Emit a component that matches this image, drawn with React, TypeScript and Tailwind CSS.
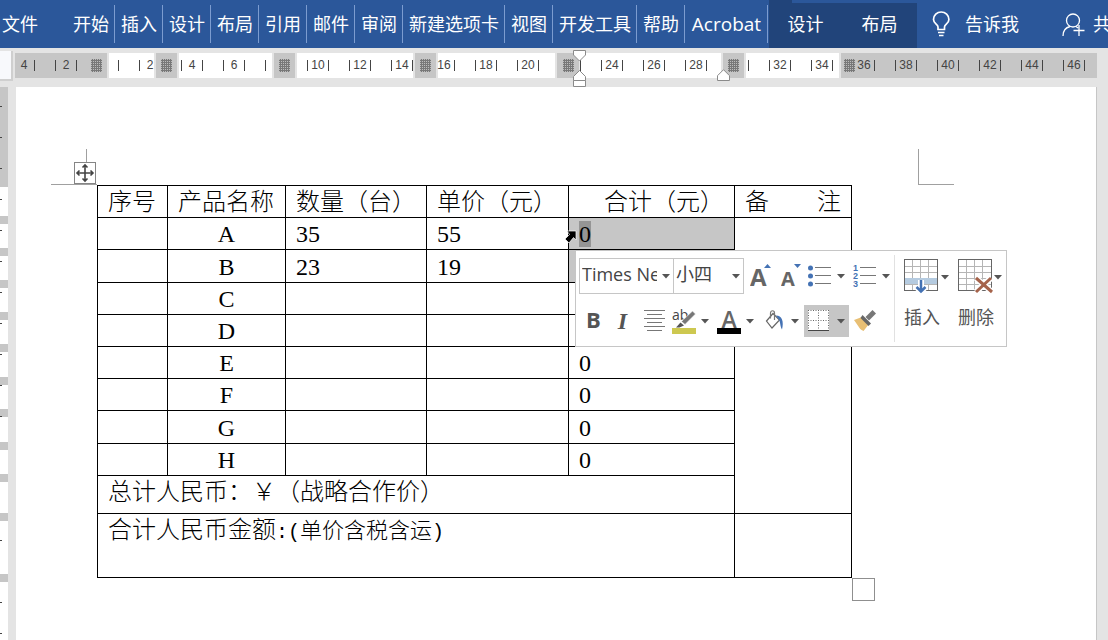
import type { ReactNode } from "react";
import clsx from "clsx";

const TABS = ["开始", "插入", "设计", "布局", "引用", "邮件", "审阅", "新建选项卡", "视图", "开发工具", "帮助", "Acrobat"];

// ── Regla ────────────────────────────────────────────────────────────────────
interface Tramo {
  ancho: string;
  gris?: boolean;
  marca?: string;
}

const TRAMOS: Tramo[] = [
  { ancho: "w-[92px]", gris: true, marca: "justify-end pr-[5px]" },
  { ancho: "w-[45px]" },
  { ancho: "w-[21px]", gris: true, marca: "justify-center" },
  { ancho: "w-[93px]" },
  { ancho: "w-[21px]", gris: true, marca: "justify-center" },
  { ancho: "w-[116px]" },
  { ancho: "w-[21px]", gris: true, marca: "justify-center" },
  { ancho: "w-[117px]" },
  { ancho: "w-[22px]", gris: true, marca: "justify-center" },
  { ancho: "w-[140px]" },
  { ancho: "w-[21px]", gris: true, marca: "justify-center" },
  { ancho: "w-[93px]" },
  { ancho: "w-[256px]", gris: true, marca: "pl-[3px]" },
];

interface Paso {
  n: string;
  izq?: boolean;
  der?: boolean;
}

const PASOS: Paso[] = [
  { n: "4", izq: false },
  { n: "2" },
  { n: "", izq: false },
  { n: "2", der: false },
  { n: "4" },
  { n: "6" },
  { n: "", der: false },
  { n: "10" },
  { n: "12" },
  { n: "14" },
  { n: "16", izq: false },
  { n: "18" },
  { n: "20" },
  { n: "", izq: false },
  { n: "24" },
  { n: "26" },
  { n: "28" },
  { n: "", izq: false },
  { n: "32" },
  { n: "34" },
  { n: "36", izq: false },
  { n: "38" },
  { n: "40" },
  { n: "42" },
  { n: "44" },
  { n: "46" },
];

function Marca() {
  return (
    <svg width="11" height="13" shapeRendering="crispEdges">
      <defs>
        <pattern id="trama" width="2" height="2" patternUnits="userSpaceOnUse">
          <rect width="2" height="2" fill="#787878" />
          <rect width="1" height="1" fill="#bcbcbc" />
        </pattern>
      </defs>
      <rect width="11" height="13" fill="url(#trama)" />
    </svg>
  );
}

function Regla() {
  return (
    <div className="flex h-[39px] bg-[#e4e4e4]">
      <div className="mt-[3px] h-[30px] w-[13px] shrink-0 border-r-2 border-b-2 border-[#cfcfcf] bg-[#f8f9fc]" />
      <div className="relative ml-[2px] mt-[5px] h-[25px] min-w-0 flex-1">
        <div className="flex h-full gap-[2px] overflow-hidden">
          {TRAMOS.map((t, i) => (
            <div key={i} className={clsx("flex shrink-0 items-center", t.ancho, t.gris ? "bg-[#c6c6c6]" : "bg-white", t.marca)}>
              {t.marca && <Marca />}
            </div>
          ))}
        </div>
        <div className="absolute inset-0 flex items-center overflow-hidden">
          {PASOS.map((p, i) => (
            <div key={i} className={clsx("flex w-[42px] shrink-0 items-center justify-center", i === 0 && "-ml-[12px]")}>
              <span className={clsx("h-[11px] w-px", p.izq !== false && "bg-[#444]")} />
              <span className="w-[20px] text-center text-[12px] leading-[25px] text-[#444]">{p.n}</span>
              <span className={clsx("h-[11px] w-px", p.der !== false && "bg-[#444]")} />
            </div>
          ))}
        </div>
        {/* sangrías */}
        <svg className="absolute -top-[3px] left-[558px]" width="14" height="37" fill="#fff" stroke="#8a8a8a">
          <path d="M.5.5h12v4.500l-6 6-6-6z" />
          <path d="M6.500 20.500l6 6v4h-12v-4z" />
          <path d="M.5 30.500h12v6h-12z" />
        </svg>
        <svg className="absolute top-[16px] left-[702px]" width="14" height="13" fill="#fff" stroke="#8a8a8a">
          <path d="M6.500.7l6 6v4.800h-12V6.700z" />
        </svg>
      </div>
    </div>
  );
}

const TRAMOS_V = [
  "h-[29px]", "h-[24px]", "h-[24px]", "h-[24px]", "h-[24px]", "h-[25px]",
  "h-[24px]", "h-[25px]", "h-[24px]", "h-[31px]", "h-[53px]",
];
const MARCAS_V = [1, 1, 1, 1, 1, 1, 1, 1, 1, 1, 1, 0, 0, 0, 1, 0, 1, 1];

function ReglaVertical() {
  return (
    <div className="relative flex w-[16px] shrink-0 flex-col overflow-hidden border-r-8 border-[#e4e4e4] bg-white">
      <div className="h-[100px] bg-[#c6c6c6]" />
      {TRAMOS_V.map((h, i) => (
        <div key={i} className="border-b-8 border-[#c6c6c6]">
          <div className={h} />
        </div>
      ))}
      <div className="absolute top-[4px] left-0">
        {MARCAS_V.map((v, i) => (
          <div key={i} className="flex h-[31px] items-center">
            <span className={clsx("h-px w-[2px]", v === 1 && "bg-[#444]")} />
          </div>
        ))}
      </div>
    </div>
  );
}

// ── Cinta ────────────────────────────────────────────────────────────────────
function Cinta() {
  return (
    <nav className="flex h-[48px] overflow-hidden bg-[#2b579a] text-[18px] text-white">
      <button className="w-[68px] shrink-0 pl-[2px] text-left">文件</button>
      {TABS.map((t) => (
        <div key={t} className="flex shrink-0 items-center">
          <button className={clsx("h-full", t === "Acrobat" ? "w-[81px] text-[19px]" : "px-[5px]")}>{t}</button>
          <span className="h-[38px] w-px bg-[#7c9cd0]" />
          {t !== "Acrobat" && <span className="w-px" />}
        </div>
      ))}
      <div className="ml-px w-[148px] shrink-0 bg-[linear-gradient(#21447a,#21447a)] bg-[length:100%_45px] bg-bottom bg-no-repeat">
        <div className="flex h-full bg-[linear-gradient(#21447a,#21447a)] bg-[length:23px_3px] bg-no-repeat">
          <button className="w-[73px]">设计</button>
          <button className="w-[75px]">布局</button>
        </div>
      </div>
      <button className="ml-[15px] flex shrink-0 items-center gap-[13px]">
        <svg width="20" height="26" viewBox="0 0 20 26" fill="none" stroke="#fff" strokeWidth="1.700">
          <path d="M6 18.500V16C6 13.500 1.500 12.500 1.500 8.500a7.700 7.500 0 0 1 15.400 0C17 12.500 12.500 13.500 12.500 16v2.500z" />
          <path d="M6 21.500h6.500M7 24.500h4.500" />
        </svg>
        <span>告诉我</span>
      </button>
      <button className="ml-[43px] flex shrink-0 items-center gap-[7px]">
        <svg width="24" height="24" viewBox="0 0 24 24" fill="none" stroke="#fff" strokeWidth="1.300">
          <circle cx="11" cy="8.500" r="6.500" />
          <path d="M1 24c0-5 3-8.500 7-9.500M14 14.500l2 1.500M17 13v11M11.500 18.500h11" />
        </svg>
        <span>共享</span>
      </button>
    </nav>
  );
}

// ── Barra flotante ───────────────────────────────────────────────────────────
function Flecha() {
  return (
    <svg className="shrink-0" width="8" height="5" fill="#555">
      <path d="M0 0h8L4 4.500z" />
    </svg>
  );
}

interface BotonProps {
  label: string;
  className?: string;
  flecha?: boolean;
  children: ReactNode;
}

function Boton({ label, className, flecha, children }: BotonProps) {
  return (
    <button
      aria-label={label}
      className={clsx("flex h-[32px] shrink-0 items-center", flecha ? "gap-[5px] pl-px" : "justify-center", className)}
    >
      {children}
      {flecha && <Flecha />}
    </button>
  );
}

function Lista({ label, valor, className }: { label: string; valor: string; className: string }) {
  return (
    <label className={clsx("relative flex h-[36px] shrink-0 items-center border border-[#c6c6c6] text-[18px]", className)}>
      <select aria-label={label} className="h-[32px] w-full appearance-none bg-transparent pr-[16px] pb-[4px] pl-[2px] text-[#444]">
        <option>{valor}</option>
      </select>
      <span className="pointer-events-none absolute right-[3px]">
        <Flecha />
      </span>
    </label>
  );
}

function Rejilla({ children }: { children: ReactNode }) {
  return (
    <svg className="shrink-0" width="35" height="36" viewBox="0 0 35 36" fill="none">
      <path d="M1 7.500h32M1 13.500h32M1 19.500h32M1 25.500h32M8.500 1v31M16.500 1v31M24.500 1v31" stroke="#b5b5b5" />
      <rect x=".5" y=".5" width="33" height="31" stroke="#666" />
      {children}
    </svg>
  );
}

function BarraFlotante() {
  return (
    <div className="absolute top-[65px] left-[478px] flex h-[97px] w-[432px] border border-[#c6c6c6] bg-white font-['Open_Sans','Noto_Sans_CJK_SC',sans-serif] text-[#555]">
      <div className="my-[4px] w-[319px] border-r border-[#e1e1e1] pl-[3px]">
        <div className="flex items-center pt-[3px]">
          <Lista label="字体" valor="Times New Roman" className="w-[95px]" />
          <Lista label="字号" valor="小四" className="-ml-px w-[71px]" />
          <Boton label="增大字号" className="ml-[3px] w-[31px]">
            <svg width="26" height="32" className="font-bold">
              <text x="0" y="26" fontSize="24" fill="#666">A</text>
              <path d="M14 8l3.500-4L21 8z" fill="#4472b4" />
            </svg>
          </Boton>
          <Boton label="减小字号" className="w-[29px]">
            <svg width="24" height="32" className="font-bold">
              <text x="0" y="26" fontSize="20" fill="#666">A</text>
              <path d="M13 4l3.500 4L20 4z" fill="#4472b4" />
            </svg>
          </Boton>
          <Boton label="项目符号" flecha className="w-[45px]">
            <svg width="24" height="24">
              <g fill="#4472b4">
                <circle cx="2.500" cy="4" r="2.500" />
                <circle cx="2.500" cy="12" r="2.500" />
                <circle cx="2.500" cy="20" r="2.500" />
              </g>
              <path d="M7 3.500h16M7 11.500h16M7 19.500h16" stroke="#777" />
            </svg>
          </Boton>
          <Boton label="编号" flecha className="w-[42px]">
            <svg width="24" height="26" className="font-['Liberation_Sans',sans-serif]">
              <g fontSize="9" fontWeight="700" fill="#4472b4">
                <text x="0" y="8">1</text>
                <text x="0" y="16">2</text>
                <text x="0" y="24">3</text>
              </g>
              <path d="M7 4.500h16M7 12.500h16M7 20.500h16" stroke="#777" />
            </svg>
          </Boton>
        </div>
        <div className="flex items-center pt-[11px]">
          <Boton label="加粗" className="w-[29px] pb-[4px] text-[22px] font-bold">B</Boton>
          <Boton label="倾斜" className="w-[29px] font-['Liberation_Serif',serif] text-[24px] font-bold italic">I</Boton>
          <Boton label="居中" className="w-[34px]">
            <svg width="21" height="22" stroke="#777">
              <path d="M0 .5h21M3 4.500h15M0 8.500h21M3 12.500h15M0 16.500h21M3 20.500h15" />
            </svg>
          </Boton>
          <Boton label="突出显示" flecha className="w-[45px]">
            <svg width="24" height="32">
              <text x="0" y="15" fontSize="14" fill="#444">ab</text>
              <path d="M20.500 6l3 3-10.500 10.500-3.500-3z" fill="#777" stroke="#fff" strokeWidth=".6" />
              <path d="M8.500 17.500l3.500 3-4.500 2H4z" fill="#555" />
              <path d="M0 23h24v6H0z" fill="#cdc850" />
            </svg>
          </Boton>
          <Boton label="字体颜色" flecha className="w-[45px]">
            <svg width="24" height="32">
              <text x="12" y="23" fontSize="23" fontWeight="600" textAnchor="middle" fill="#666">A</text>
              <path d="M0 23h24v6H0z" fill="#000" />
            </svg>
          </Boton>
          <Boton label="底纹" flecha className="w-[43px]">
            <svg width="24" height="24" fill="none">
              <path d="M4.500 12L11 4.500l6.500 6.500-7.500 8z" stroke="#666" strokeWidth="1.200" />
              <path d="M8.500 9.500V4c0-3 4-3 4 0v7" stroke="#777" strokeWidth="1.200" />
              <path d="M14 6.500c6 0 8 6 6 14-1.500-2-1.500-5-2.500-9z" fill="#4472b4" />
            </svg>
          </Boton>
          <Boton label="边框" flecha className="w-[45px] bg-[#c6c6c6]">
            <svg width="27" height="24" viewBox="-2 0 27 24" fill="none">
              <path d="M1 1h21v21H1z" fill="#fff" />
              <path d="M1.500 1v20M11.500 1v20M21.500 1v20M1 1.500h21M1 11.500h21" stroke="#666" strokeDasharray="1 1.500" />
              <path d="M1 21.500h21" stroke="#444" />
            </svg>
          </Boton>
          <Boton label="格式刷" className="w-[31px]">
            <svg width="24" height="24">
              <path d="M1 11l8-3 7 7-5.500 7c-3-1-4-3-5-4.500L1 11z" fill="#e8bf74" />
              <path d="M9.500 6l8.500 8.500-2.500 2.500L7.500 9z" fill="#666" />
              <path d="M12.500 8L19.500 1l3.500 3.500L16 11.500z" fill="#777" />
            </svg>
          </Boton>
        </div>
      </div>
      <button className="flex w-[55px] shrink-0 flex-col pt-[8px] pl-[9px] text-left text-[18px]">
        <span className="flex items-center gap-[2px]">
          <Rejilla>
            <path d="M1 19h32v6H1z" fill="#b5cbe0" />
            <path d="M17 21v11M12.500 28l4.500 4.500 4.500-4.500" stroke="#fff" strokeWidth="6" />
            <path d="M17 21v11M12.500 28l4.500 4.500 4.500-4.500" stroke="#4472b4" strokeWidth="2.500" />
          </Rejilla>
          <Flecha />
        </span>
        <span className="pt-[9px]">插入</span>
      </button>
      <button className="flex w-[54px] shrink-0 flex-col pt-[8px] pl-[8px] text-left text-[18px]">
        <span className="flex items-center gap-px">
          <Rejilla>
            <path d="M18 19l16 14M33 19L18 33" stroke="#fff" strokeWidth="6" />
            <path d="M18 19l16 14M33 19L18 33" stroke="#a5634b" strokeWidth="3" />
          </Rejilla>
          <Flecha />
        </span>
        <span className="pt-[9px]">删除</span>
      </button>
    </div>
  );
}

// ── Tabla ────────────────────────────────────────────────────────────────────
interface Fila {
  nombre: string;
  cantidad?: string;
  precio?: string;
  total?: string;
  alto?: boolean;
}

const FILAS: Fila[] = [
  { nombre: "A", cantidad: "35", precio: "55", total: "0" },
  { nombre: "B", cantidad: "23", precio: "19", alto: true },
  { nombre: "C" },
  { nombre: "D" },
  { nombre: "E", total: "0" },
  { nombre: "F", total: "0" },
  { nombre: "G", total: "0", alto: true },
  { nombre: "H", total: "0" },
];

const celda = "border border-black pt-[2px] pb-0 px-[10px] font-light";

function Tabla() {
  return (
    <table className="w-[755px] table-fixed border-collapse text-[24px] leading-[29px] text-black">
      <colgroup>
        <col className="w-[70px]" />
        <col className="w-[118px]" />
        <col className="w-[141px]" />
        <col className="w-[142px]" />
        <col className="w-[166px]" />
        <col className="w-[117px]" />
      </colgroup>
      <thead>
        <tr className="h-[32px] text-left whitespace-nowrap">
          <th className={celda}>序号</th>
          <th className={celda}>产品名称</th>
          <th className={celda}>数量（台）</th>
          <th className={celda}>单价（元）</th>
          <th className={clsx(celda, "text-right")}>合计（元）</th>
          <th className={celda}>
            <span className="flex justify-between">
              <span>备</span>
              <span>注</span>
            </span>
          </th>
        </tr>
      </thead>
      <tbody>
        {FILAS.map((f, i) => (
          <tr key={f.nombre} className={f.alto ? "h-[33px]" : "h-[32px]"}>
            <td className={celda} />
            <td className={clsx(celda, "text-center")}>{f.nombre}</td>
            <td className={celda}>{f.cantidad}</td>
            <td className={celda}>{f.precio}</td>
            <td className={clsx(celda, i < 2 && "bg-[#c6c6c6]")}>
              {i === 0 ? <span className="bg-[#959595]">{f.total}</span> : f.total}
            </td>
            {i === 0 && <td className={celda} rowSpan={9} />}
          </tr>
        ))}
        <tr className="h-[38px] align-top">
          <td className={celda} colSpan={5}>总计人民币：￥（战略合作价）</td>
        </tr>
        <tr className="h-[64px] align-top">
          <td className={celda} colSpan={5}>
            合计人民币金额
            <span className="font-['Liberation_Mono','Noto_Sans_CJK_SC',monospace] text-[20px]">:(</span>
            <span className="text-[22px]">单价含税含运</span>
            <span className="font-['Liberation_Mono','Noto_Sans_CJK_SC',monospace] text-[20px]">)</span>
          </td>
          <td className={celda} />
        </tr>
      </tbody>
    </table>
  );
}

export default function App() {
  return (
    <div className="flex min-h-screen flex-col overflow-hidden bg-[#e4e4e4] font-['Open_Sans','Noto_Sans_CJK_SC',sans-serif]">
      <Cinta />
      <div className="font-['Liberation_Sans',sans-serif]">
        <Regla />
      </div>
      <div className="flex flex-1">
        <ReglaVertical />
        <main className="mr-[11px] flex-1 border-r border-[#c6c6c6] bg-white pt-[98px] pl-[81px] font-['Liberation_Serif','Noto_Sans_CJK_SC',serif]">
          <div className="relative w-[755px]">
            <Tabla />
            {/* marcas de margen */}
            <div className="absolute -top-[36px] -left-[46px] h-[36px] w-[36px] border-r border-b border-[#a0a0a0]" />
            <div className="absolute -top-px -left-[12px] h-px w-[12px] bg-[#a0a0a0]" />
            <div className="absolute -top-[36px] left-[821px] h-[36px] w-[36px] border-b border-l border-[#a0a0a0]" />
            <button aria-label="移动表格" className="absolute -top-[23px] -left-[23px] size-[22px] border border-[#858585] bg-white">
              <svg width="20" height="20" fill="none" stroke="#444" strokeWidth="1.600">
                <path d="M10 2v16M2 10h16M7.500 4.500L10 2l2.500 2.500M7.500 15.500L10 18l2.500-2.500M4.500 7.500L2 10l2.500 2.500M15.500 7.500L18 10l-2.500 2.500" />
              </svg>
            </button>
            <div className="absolute -right-[23px] -bottom-[23px] size-[23px] border border-[#8f8f8f]" />
            <svg className="absolute top-[44px] left-[467px]" width="14" height="15">
              <path d="M3 2h9v9L9.500 8.500 5 14 1 10l4.500-4.500z" fill="#000" stroke="#fff" strokeWidth=".7" />
            </svg>
            <BarraFlotante />
          </div>
        </main>
      </div>
    </div>
  );
}
